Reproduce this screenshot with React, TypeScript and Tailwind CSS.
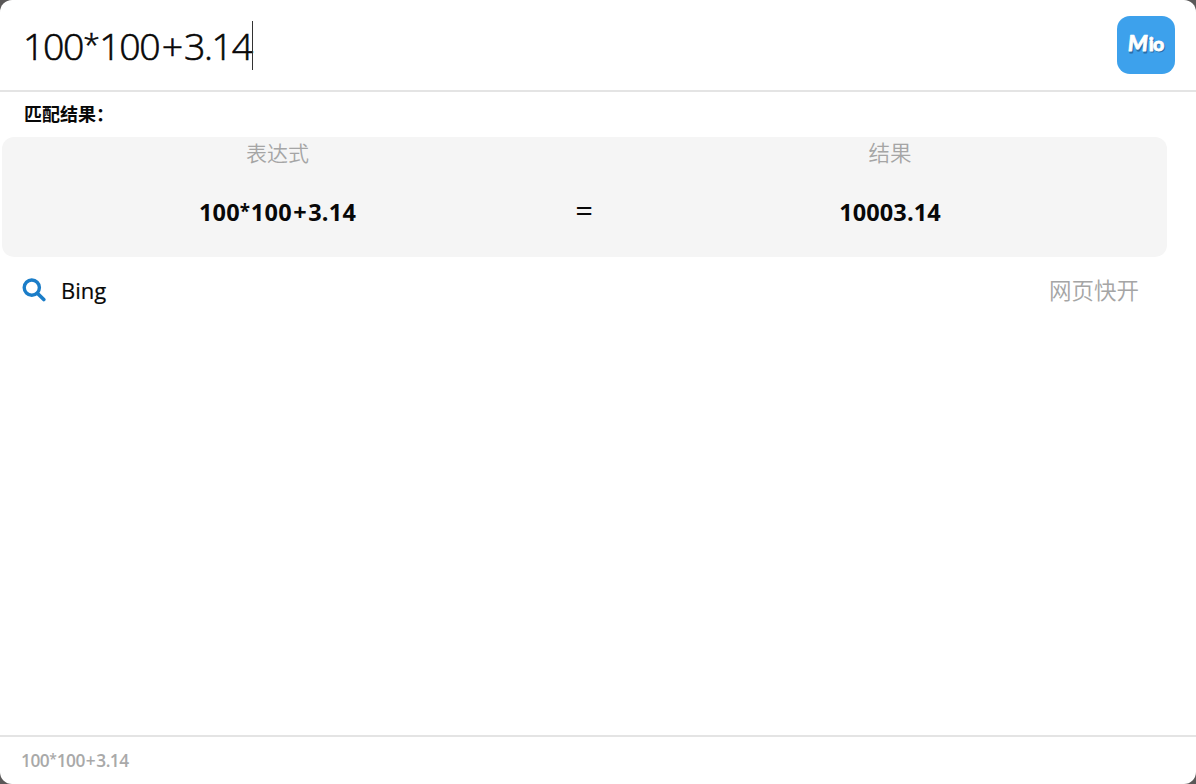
import { useState } from 'react';

const LogoText = () => (
  <>
    <text x="11" y="35.3" fontSize="22" textLength="20" lengthAdjust="spacingAndGlyphs" transform="skewX(-6) translate(3 0)">M</text>
    <text x="31.8" y="35" fontSize="19.5">i</text>
    <text x="36" y="35" fontSize="19.5">o</text>
  </>
);

const MioLogo = () => (
  <svg viewBox="0 0 58 58" className="w-[58px] h-[58px] shrink-0" role="img" aria-label="Mio">
    <rect width="58" height="58" rx="13" fill="#3da1ec" />
    <g fontFamily="Lato, sans-serif" fontWeight="900" strokeWidth="0.8" strokeLinejoin="round">
      <g fill="#2a6ea8" stroke="#2a6ea8" transform="translate(0.9 1.3)">
        <LogoText />
      </g>
      <g fill="#fff" stroke="#fff">
        <LogoText />
      </g>
    </g>
  </svg>
);

const SearchIcon = () => (
  <svg viewBox="0 0 24 24" className="w-6 h-6 shrink-0" fill="none" stroke="#1b7dc8">
    <circle cx="9.8" cy="9.6" r="7.6" strokeWidth="3.4" />
    <path d="M15.6 15.4 21.8 21.6" strokeWidth="3.6" strokeLinecap="round" />
  </svg>
);

// operators get their own size and spacing, in em so they scale with the text
const Expression = ({ value }: { value: string }) => (
  <>
    {value.split(/([*+])/).map((part, i) => {
      if (part === '+') return <span key={i} className="mx-[0.06em]">+</span>;
      if (part === '*') return <span key={i} className="text-[0.8em] leading-none align-[0.16em] mr-[0.03em]">*</span>;
      return <span key={i}>{part}</span>;
    })}
  </>
);

const App = () => {
  const [query] = useState('100*100+3.14');

  return (
    <div className="h-screen bg-[#5a5858] font-['Open_Sans','Noto_Sans_CJK_SC',sans-serif] text-[#080808]">
      <div className="h-full flex flex-col bg-white rounded-xl overflow-hidden">
        <header className="h-[92px] shrink-0 flex items-center justify-between border-b-2 border-[#e4e4e4] pl-[23px] pr-[21px]">
          <div className="flex items-center">
            <span className="pt-0.5 text-[37.5px] leading-[48px] font-light tracking-[-1.35px] whitespace-nowrap [-webkit-text-stroke:0.6px_#080808]">
              <Expression value={query} />
            </span>
            <span className="w-px h-[49px] bg-[#333]"></span>
          </div>
          <MioLogo />
        </header>

        <main className="flex-1 flex flex-col">
          <h2 className="h-[45px] pl-6 text-[18px] leading-[44px] font-bold">匹配结果：</h2>

          <section className="ml-0.5 mr-[29px] h-[120px] rounded-xl bg-[#f5f5f5] flex">
            <div className="w-[551px] flex flex-col items-center">
              <span className="text-[21px] leading-8 font-[350] text-[#a5a5a5]">表达式</span>
              <span className="mt-[27px] text-[23.5px] leading-8 font-bold tracking-[0.2px] whitespace-nowrap">
                <Expression value={query} />
              </span>
            </div>
            <div className="w-[62px] pt-[57px] text-center text-[31px] leading-8">=</div>
            <div className="flex-1 flex flex-col items-center pr-0.5">
              <span className="text-[21.5px] leading-8 font-[350] text-[#a5a5a5]">结果</span>
              <span className="mt-[27px] text-[23.5px] leading-8 font-bold tracking-[0.1px]">10003.14</span>
            </div>
          </section>

          <div className="h-[66px] flex items-center pl-[22px] pr-[57px]">
            <SearchIcon />
            <span className="ml-[15px] text-[22px] [-webkit-text-stroke:0.2px_#080808]">Bing</span>
            <span className="ml-auto pt-0.5 text-[22.5px] font-[350] text-[#a5a5a5]">网页快开</span>
          </div>
        </main>

        <footer className="h-[49px] shrink-0 flex items-center border-t-2 border-[#e4e4e4] pl-[21px] text-[17.3px] font-semibold tracking-[-0.5px] text-[#a9a9a9]">
          <div>
            <Expression value={query} />
          </div>
        </footer>
      </div>
    </div>
  );
};

export default App;
